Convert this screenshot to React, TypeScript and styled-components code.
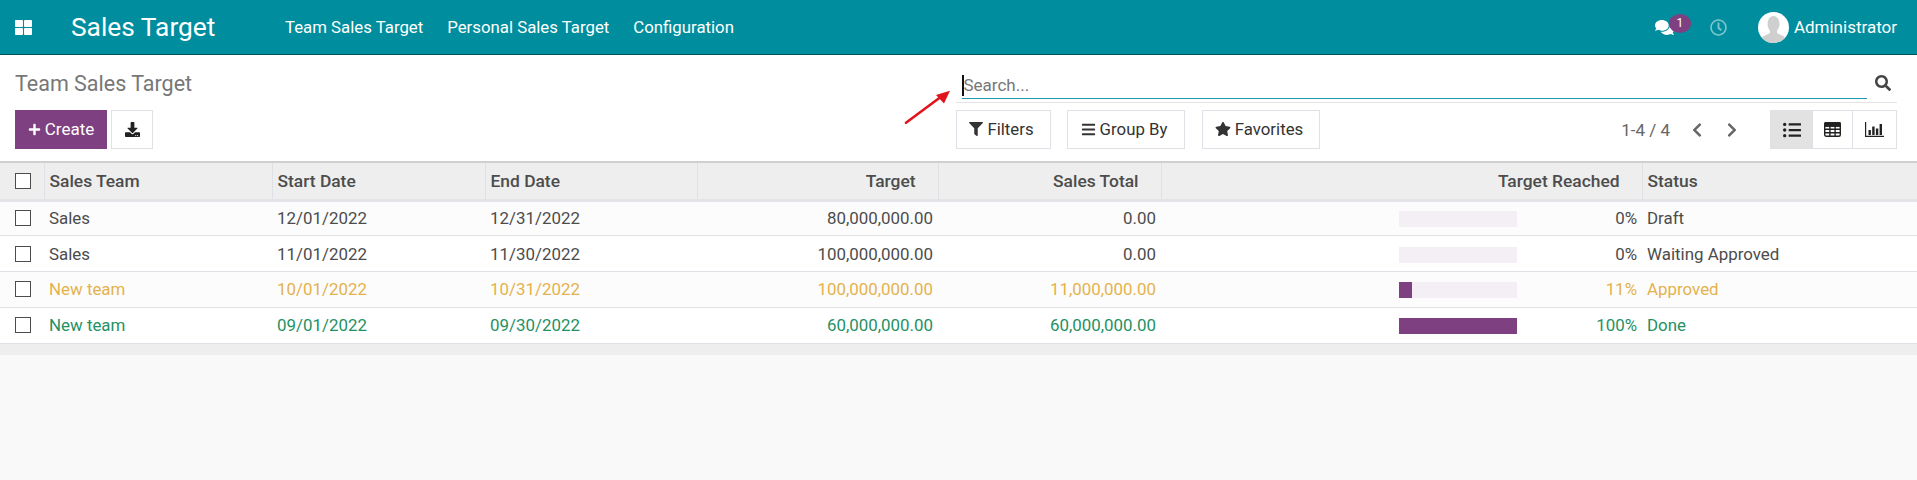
import React from "react";
import styled, { createGlobalStyle } from "styled-components";
import {
  FaThLarge,
  FaPlus,
  FaDownload,
  FaFilter,
  FaBars,
  FaStar,
  FaSearch,
  FaChevronLeft,
  FaChevronRight,
  FaListUl,
  FaComments,
  FaRegClock,
} from "react-icons/fa";

const GlobalStyle = createGlobalStyle`
  html, body { margin: 0; padding: 0; height: 100%; overflow: hidden; }
  body { font-family: Roboto, "Liberation Sans", sans-serif; font-size: 17px; color: #4c4c4c; background: #f9f9f9; }
`;

const Page = styled.div`
  display: flex;
  flex-direction: column;
  height: 480px;
`;

const Navbar = styled.header`
  display: flex;
  align-items: center;
  height: 54px;
  border-bottom: 1px solid #00555f;
  background: #008e9e;
  color: #fff;
  padding: 0 20px 0 15px;
  flex: none;
`;

const AppsIcon = styled(FaThLarge)`
  width: 17px;
  height: 17px;
`;

const Brand = styled.span`
  font-size: 26.3px;
  margin-left: 39px;
  width: 214px;
`;

const Menu = styled.nav`
  display: flex;
  gap: 24px;
  font-size: 16.8px;
`;

const Systray = styled.div`
  display: flex;
  align-items: center;
  margin-left: auto;
`;

const ChatWrap = styled.div`
  position: relative;
  display: flex;
  width: 36px;
`;

const Badge = styled.span`
  position: absolute;
  left: 14px;
  top: -4px;
  width: 22px;
  height: 19px;
  border-radius: 50%;
  background: #7e4080;
  font-size: 12px;
  line-height: 19px;
  text-align: center;
`;

const ClockIcon = styled(FaRegClock)`
  width: 17px;
  height: 17px;
  margin-left: 19px;
  opacity: 0.5;
`;

const Avatar = styled.svg`
  width: 31px;
  height: 31px;
  margin-left: 31px;
`;

const UserName = styled.span`
  margin-left: 5px;
  font-size: 17px;
`;

const ControlPanel = styled.section`
  display: grid;
  grid-template-columns: 941px 1fr;
  grid-template-rows: 48px 39px;
  row-gap: 7px;
  height: 108px;
  box-sizing: border-box;
  padding: 0 20px 0 15px;
  background: #fff;
  border-bottom: 2px solid #cfcfcf;
  position: relative;
  flex: none;
`;

const Title = styled.h1`
  margin: 0;
  padding-top: 13px;
  font-size: 21.5px;
  line-height: 32px;
  font-weight: 400;
  color: #777;
`;

const SearchRow = styled.div`
  display: flex;
  align-items: flex-end;
  border-bottom: 1px solid #e4e4e4;
  padding: 0 6px 3px 6px;
`;

const SearchBox = styled.div`
  display: flex;
  align-items: center;
  flex: 1;
  height: 26px;
  border-bottom: 1px solid #1f9aac;
`;

const Caret = styled.span`
  width: 1.5px;
  height: 21px;
  background: #111;
  flex: none;
`;

const SearchInput = styled.input`
  flex: 1;
  border: 0;
  outline: 0;
  padding: 0;
  background: none;
  font: 400 17px Roboto, sans-serif;
  color: #4c4c4c;
  &::placeholder { color: #777; opacity: 1; }
`;

const SearchIcon = styled(FaSearch)`
  width: 16px;
  height: 16px;
  margin: 0 0 8px 8px;
  color: #444;
`;

const ButtonRow = styled.div`
  display: flex;
  align-items: stretch;
  gap: 4px;
`;

const CreateButton = styled.button`
  display: flex;
  align-items: center;
  justify-content: center;
  gap: 4px;
  width: 92px;
  border: 0;
  padding: 0 0 1px;
  background: #7e4080;
  color: #fff;
  font: 400 17px Roboto, sans-serif;
`;

const ImportButton = styled.button`
  width: 42px;
  border: 1px solid #dee2e6;
  padding: 0;
  background: #fff;
  color: #222;
  display: flex;
  align-items: center;
  justify-content: center;
`;

const SearchOptions = styled.div`
  display: flex;
  align-items: stretch;
`;

const OptionButton = styled.button<{ $width: number; $gap: number }>`
  display: flex;
  align-items: center;
  justify-content: center;
  gap: 4px;
  width: ${(p) => p.$width}px;
  margin-right: ${(p) => p.$gap}px;
  border: 1px solid #dee2e6;
  padding: 0 4px 1px 0;
  background: #fff;
  color: #333;
  font: 400 16.8px Roboto, sans-serif;
`;

const Pager = styled.div`
  display: flex;
  align-items: center;
  margin-left: auto;
  color: #666;
`;

const PagerNav = styled.span`
  display: flex;
  align-items: center;
  gap: 19px;
  margin: 0 31px 0 19px;
  color: #666;
`;

const ViewButton = styled.button<{ $active?: boolean; $width: number }>`
  display: flex;
  align-items: center;
  justify-content: center;
  width: ${(p) => p.$width}px;
  padding: 0;
  margin-left: -1px;
  border: 1px solid #dee2e6;
  background: ${(p) => (p.$active ? "#e2e2e2" : "#fff")};
  color: #222;
`;

const ArrowMark = styled.svg`
  position: absolute;
  left: 900px;
  top: 30px;
  width: 56px;
  height: 44px;
`;

const Table = styled.table`
  width: 1917px;
  border-collapse: collapse;
  table-layout: fixed;
  flex: none;
`;

const HeadRow = styled.tr`
  height: 37px;
  background: #eee;
  border-bottom: 3px solid #e2e4e8;
`;

const HeadCell = styled.th<{ $right?: boolean }>`
  padding: ${(p) => (p.$right ? "0 22px 0 5px" : "0 5px 0 5px")};
  text-align: ${(p) => (p.$right ? "right" : "left")};
  border-left: 1px solid #dee2e6;
  font-size: 17.4px;
  font-weight: 500;
  color: #4c4c4c;
  &:first-child { border-left: 0; }
`;

const Row = styled.tr<{ $tone?: string; $odd?: boolean }>`
  height: 35.8px;
  background: ${(p) => (p.$odd ? "#fcfcfc" : "#fff")};
  border-bottom: 1px solid #dee2e6;
  color: ${(p) => p.$tone || "#4c4c4c"};
`;

const Cell = styled.td<{ $right?: boolean }>`
  padding: 0 5px 0 5px;
  text-align: ${(p) => (p.$right ? "right" : "left")};
  font-size: 16.9px;
  white-space: nowrap;
`;

const CheckCell = styled.td`
  padding: 0 0 0 15px;
`;

const CheckHead = styled.th`
  padding: 0 0 0 15px;
`;

const Check = styled.span`
  display: block;
  width: 16px;
  height: 16px;
  box-sizing: border-box;
  border: 1px solid #4c4c4c;
  background: #fff;
`;

const ProgressWrap = styled.div`
  display: flex;
  align-items: center;
  justify-content: flex-end;
`;

const Track = styled.div`
  width: 118px;
  height: 16px;
  margin-top: 2px;
  background: #f4eef5;
`;

const Fill = styled.div`
  height: 100%;
  background: #7e4080;
`;

const Percent = styled.span`
  width: 120px;
  text-align: right;
`;

const Footer = styled.div`
  height: 11px;
  background: #eee;
  flex: none;
`;

const widths = [44, 228, 213, 212, 241, 223, 481, 275];

const rows = [
  { team: "Sales", start: "12/01/2022", end: "12/31/2022", target: "80,000,000.00", total: "0.00", pct: 0, status: "Draft" },
  { team: "Sales", start: "11/01/2022", end: "11/30/2022", target: "100,000,000.00", total: "0.00", pct: 0, status: "Waiting Approved" },
  { team: "New team", start: "10/01/2022", end: "10/31/2022", target: "100,000,000.00", total: "11,000,000.00", pct: 11, status: "Approved", tone: "#e4b24c" },
  { team: "New team", start: "09/01/2022", end: "09/30/2022", target: "60,000,000.00", total: "60,000,000.00", pct: 100, status: "Done", tone: "#1f9163" },
];

const GridIcon = () => (
  <svg width="17" height="15" viewBox="0 0 17 15" fill="none" stroke="currentColor" strokeWidth="1.4">
    <rect x="0.7" y="0.7" width="15.6" height="13.6" rx="1.5" />
    <path d="M1 4h15M1 7.300h15M1 10.700h15M5.900 4v10M11.100 4v10" />
    <rect x="1" y="1" width="15" height="3" fill="currentColor" />
  </svg>
);

const BarsIcon = () => (
  <svg width="19" height="15" viewBox="0 0 19 15" fill="currentColor">
    <path d="M0 0h1.200v13.800H19V15H0z" />
    <rect x="3.500" y="8" width="2.400" height="5" />
    <rect x="7.200" y="4.500" width="2.400" height="8.500" />
    <rect x="10.900" y="6.500" width="2.400" height="6.500" />
    <rect x="14.600" y="2" width="2.400" height="11" />
  </svg>
);

export default function App() {
  return (
    <Page>
      <GlobalStyle />
      <Navbar>
        <AppsIcon />
        <Brand>Sales Target</Brand>
        <Menu>
          <span>Team Sales Target</span>
          <span>Personal Sales Target</span>
          <span>Configuration</span>
        </Menu>
        <Systray>
          <ChatWrap>
            <FaComments size={19} />
            <Badge>1</Badge>
          </ChatWrap>
          <ClockIcon />
          <Avatar viewBox="0 0 31 31">
            <defs>
              <clipPath id="avatar-clip">
                <circle cx="15.5" cy="15.5" r="15.5" />
              </clipPath>
            </defs>
            <circle cx="15.5" cy="15.5" r="15.5" fill="#fff" />
            <g clipPath="url(#avatar-clip)" fill="#cfcfcf">
              <ellipse cx="15.5" cy="12" rx="6" ry="8" />
              <path d="M12 18h7v3l7 3.5c1.5 1 2 3 2 6.5H3c0-3.500.5-5.500 2-6.500l7-3.500z" />
            </g>
          </Avatar>
          <UserName>Administrator</UserName>
        </Systray>
      </Navbar>

      <ControlPanel>
        <Title>Team Sales Target</Title>
        <SearchRow>
          <SearchBox>
            <Caret />
            <SearchInput placeholder="Search..." readOnly />
          </SearchBox>
          <SearchIcon />
        </SearchRow>
        <ButtonRow>
          <CreateButton>
            <FaPlus size={13} />
            Create
          </CreateButton>
          <ImportButton>
            <FaDownload size={15} />
          </ImportButton>
        </ButtonRow>
        <SearchOptions>
          <OptionButton $width={95} $gap={16}>
            <FaFilter size={14} />
            Filters
          </OptionButton>
          <OptionButton $width={118} $gap={17}>
            <FaBars size={15} />
            Group By
          </OptionButton>
          <OptionButton $width={118} $gap={0}>
            <FaStar size={16} />
            Favorites
          </OptionButton>
          <Pager>
            1-4 / 4
            <PagerNav>
              <FaChevronLeft size={16} />
              <FaChevronRight size={16} />
            </PagerNav>
          </Pager>
          <ViewButton $active $width={43}>
            <FaListUl size={18} />
          </ViewButton>
          <ViewButton $width={41}>
            <GridIcon />
          </ViewButton>
          <ViewButton $width={45}>
            <BarsIcon />
          </ViewButton>
        </SearchOptions>
        <ArrowMark viewBox="0 0 56 44">
          <path d="M6 37.700 L42 11" stroke="#e0141c" strokeWidth="2.6" strokeLinecap="round" />
          <path d="M50 5.700 L36 10 L44 18.500 Z" fill="#e0141c" />
        </ArrowMark>
      </ControlPanel>

      <Table>
        <colgroup>
          {widths.map((w, i) => (
            <col key={i} width={w} />
          ))}
        </colgroup>
        <thead>
          <HeadRow>
            <CheckHead>
              <Check />
            </CheckHead>
            <HeadCell>Sales Team</HeadCell>
            <HeadCell>Start Date</HeadCell>
            <HeadCell>End Date</HeadCell>
            <HeadCell $right>Target</HeadCell>
            <HeadCell $right>Sales Total</HeadCell>
            <HeadCell $right>Target Reached</HeadCell>
            <HeadCell>Status</HeadCell>
          </HeadRow>
        </thead>
        <tbody>
          {rows.map((r, i) => (
            <Row key={i} $tone={r.tone} $odd={i % 2 === 0}>
              <CheckCell>
                <Check />
              </CheckCell>
              <Cell>{r.team}</Cell>
              <Cell>{r.start}</Cell>
              <Cell>{r.end}</Cell>
              <Cell $right>{r.target}</Cell>
              <Cell $right>{r.total}</Cell>
              <Cell>
                <ProgressWrap>
                  <Track>
                    <Fill style={{ width: `${r.pct}%` }} />
                  </Track>
                  <Percent>{r.pct}%</Percent>
                </ProgressWrap>
              </Cell>
              <Cell>{r.status}</Cell>
            </Row>
          ))}
        </tbody>
      </Table>
      <Footer />
    </Page>
  );
}
